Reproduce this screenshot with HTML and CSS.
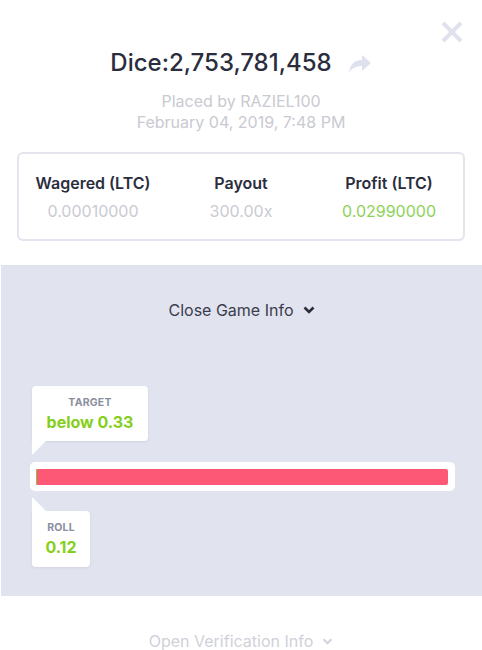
FILE: index.html
```html
<!DOCTYPE html>
<html>
<head>
<meta charset="utf-8">
<link rel="stylesheet" href="styles.css">
</head>
<body>
<div class="modal">
  <div class="top">
    <button class="close" aria-label="Close">
      <svg width="22" height="22" viewBox="0 0 22 22"><path d="M2 2 L20 20 M20 2 L2 20" stroke="#dfe1ee" stroke-width="4" stroke-linecap="butt"/></svg>
    </button>
    <div class="title-row">
      <h1 class="title">Dice:2,753,781,458</h1>
      <svg class="share" width="24" height="18" viewBox="0 0 24 18"><path d="M14 0 L23 8 L14 16 L14 11 C8 11 4 13 1 18 C2 10 6 5 14 5 Z" fill="#dfe1ee"/></svg>
    </div>
    <div class="meta">
      <div>Placed by RAZIEL100</div>
      <div>February 04, 2019, 7:48 PM</div>
    </div>
    <div class="card">
      <div class="stat">
        <div class="label">Wagered (LTC)</div>
        <div class="value">0.00010000</div>
      </div>
      <div class="stat">
        <div class="label">Payout</div>
        <div class="value">300.00x</div>
      </div>
      <div class="stat">
        <div class="label">Profit (LTC)</div>
        <div class="value green">0.02990000</div>
      </div>
    </div>
  </div>
  <div class="panel">
    <div class="toggle dark">Close Game Info
      <svg width="12" height="8" viewBox="0 0 12 8"><path d="M1.5 1.5 L6 6 L10.5 1.5" fill="none" stroke="#2a2d3d" stroke-width="2.6"/></svg>
    </div>
    <div class="chart">
      <div class="tip tip-target">
        <div class="tip-label">TARGET</div>
        <div class="tip-value">below 0.33</div>
      </div>
      <div class="track"><div class="fill"><span class="win" style="width:1px"></span></div></div>
      <div class="tip tip-roll">
        <div class="tip-label">ROLL</div>
        <div class="tip-value">0.12</div>
      </div>
    </div>
  </div>
  <div class="toggle light">Open Verification Info
    <svg width="11" height="7" viewBox="0 0 12 8"><path d="M1.5 1.5 L6 6 L10.5 1.5" fill="none" stroke="#d3d4db" stroke-width="2.4"/></svg>
  </div>
</div>
</body>
</html>
```
FILE: styles.css
```css
* { box-sizing: border-box; }
html, body { margin: 0; padding: 0; background: #fff; }
body {
  font-family: "Inter", "Lato", "Liberation Sans", sans-serif;
  color: #2a2d3d;
  width: 482px;
  height: 650px;
  overflow: hidden;
}
.modal { width: 482px; }
.top {
  position: relative;
  padding: 47px 17px 24px 17px;
}
.close {
  position: absolute;
  top: 21px;
  right: 19px;
  width: 22px;
  height: 22px;
  padding: 0;
  border: 0;
  background: none;
}
.close svg { display: block; }
.title-row {
  display: flex;
  justify-content: center;
  align-items: center;
  gap: 16px;
}
.title {
  margin: 0;
  font-size: 24px;
  font-weight: 500;
  line-height: 32px;
  letter-spacing: 0;
}
.share { margin-top: 2px; }
.meta {
  margin-top: 12px;
  text-align: center;
  color: #c9cad2;
  font-size: 16px;
  line-height: 21px;
}
.card {
  margin-top: 19px;
  border: 2px solid #e3e4ee;
  border-radius: 6px;
  height: 89px;
  display: grid;
  grid-template-columns: 1fr 1fr 1fr;
  padding-top: 19px;
}
.stat { text-align: center; }
.label {
  font-size: 16px;
  font-weight: 600;
  line-height: 20px;
  color: #2a2d3d;
}
.value {
  margin-top: 8px;
  font-size: 16px;
  line-height: 20px;
  color: #cacbd1;
}
.value.green { color: #8cd258; }
.panel {
  margin-left: 1px;
  background: #e1e3ef;
  height: 331px;
  padding-top: 35px;
}
.toggle {
  display: flex;
  justify-content: center;
  align-items: center;
  gap: 9px;
  font-size: 16px;
  line-height: 20px;
}
.toggle.dark { color: #3a3d4d; }
.toggle.light { color: #d0d1d8; margin-top: 35px; }
.chart {
  position: relative;
  margin: 66px 27px 0 29px;
  padding-top: 76px;
}
.track {
  background: #fff;
  border-radius: 5px;
  height: 29px;
  padding: 7px 7px 6px 6px;
}
.fill {
  height: 16px;
  background: #fd5876;
  border-radius: 2px;
  display: flex;
}
.win { background: #8cc63f; height: 100%; }
.tip {
  position: absolute;
  left: 2px;
  background: #fff;
  border-radius: 4px;
  text-align: center;
  box-shadow: 0 1px 3px rgba(40, 45, 80, 0.08);
}
.tip-target {
  top: 0;
  width: 116px;
  height: 55px;
  padding-top: 10px;
  border-bottom-left-radius: 0;
}
.tip-target::after {
  content: "";
  position: absolute;
  left: 0;
  top: 100%;
  border-top: 14px solid #fff;
  border-right: 14px solid transparent;
}
.tip-roll {
  top: 125px;
  width: 58px;
  height: 56px;
  padding-top: 10px;
  border-top-left-radius: 0;
}
.tip-roll::before {
  content: "";
  position: absolute;
  left: 0;
  bottom: 100%;
  border-bottom: 14px solid #fff;
  border-right: 14px solid transparent;
}
.tip-label {
  font-size: 10.5px;
  font-weight: 700;
  color: #8a8e9d;
  line-height: 14px;
  letter-spacing: 0.2px;
}
.tip-value {
  font-size: 16px;
  font-weight: 700;
  color: #84cf1b;
  line-height: 20px;
  margin-top: 2px;
}
```
